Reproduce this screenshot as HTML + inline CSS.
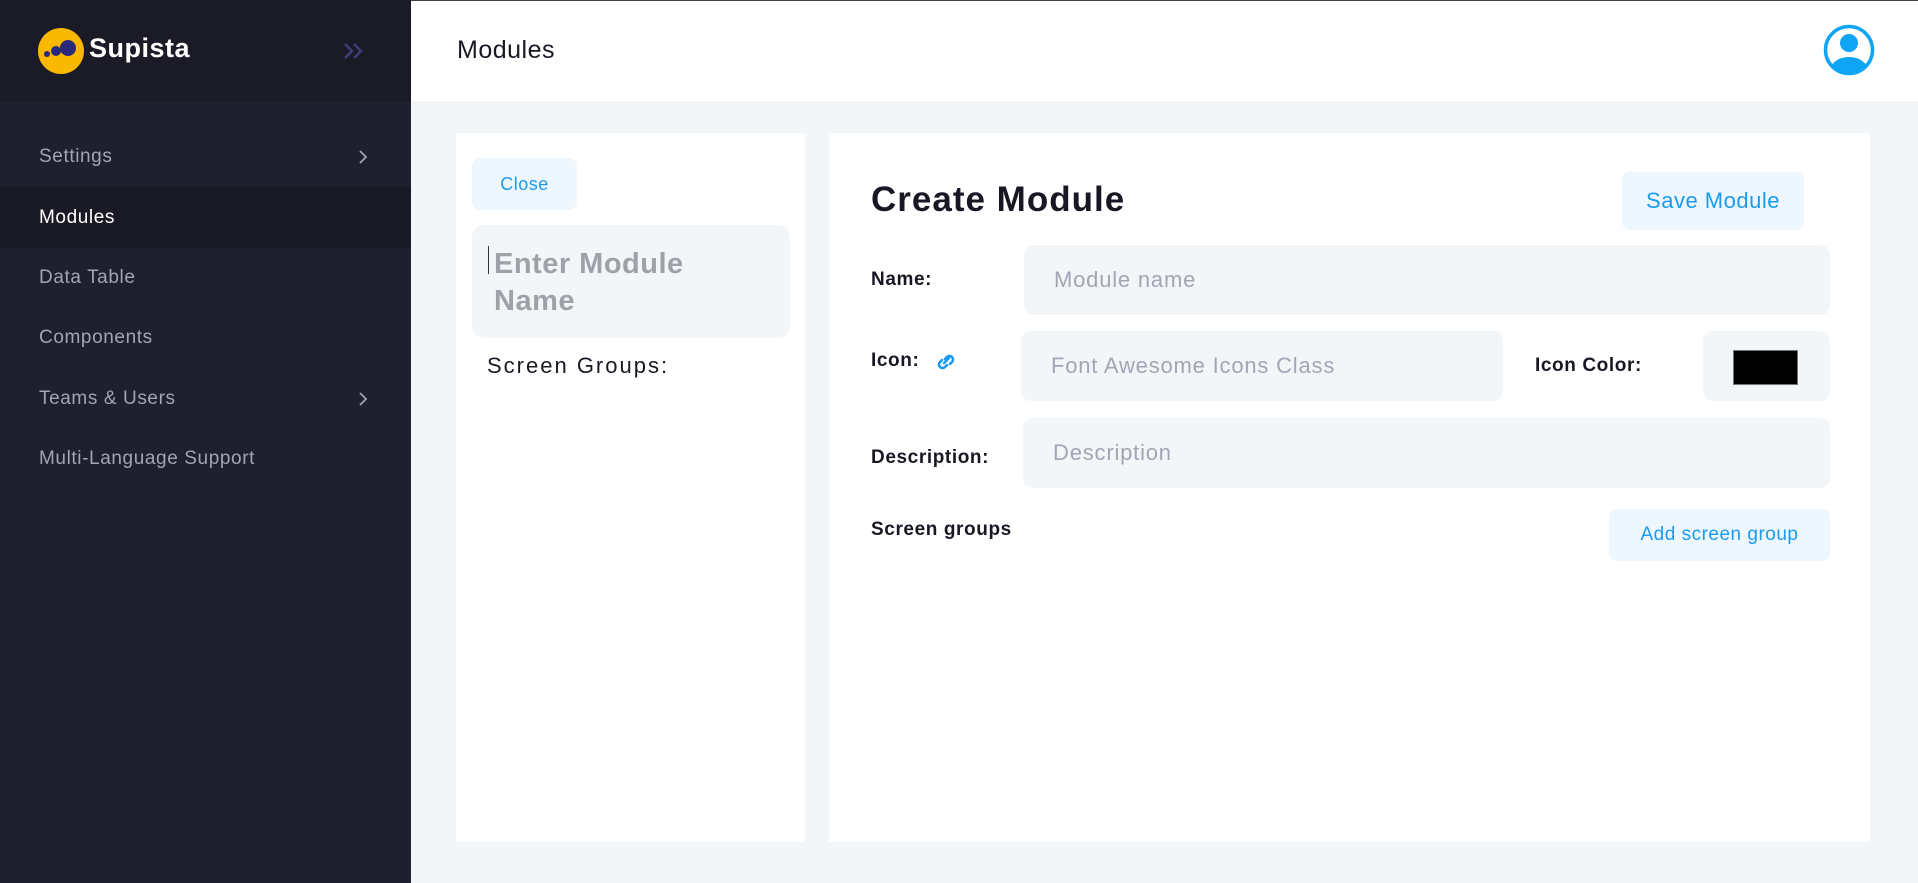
<!DOCTYPE html><html><head><style>
*{box-sizing:border-box;margin:0;padding:0}
body{width:1918px;height:883px;overflow:hidden;background:#f3f6f9;font-family:"Liberation Sans",sans-serif;position:relative;letter-spacing:0.5px}
.a{position:absolute}
.side{left:0;top:0;width:411px;height:883px;background:#1f1f2e}
.sh{left:0;top:0;width:411px;height:101px;background:#1b1b27}
.nav{left:39px;font-size:19px;color:#a3a3b8;letter-spacing:0.6px}
.lbl{font-size:19px;font-weight:bold;color:#181824;letter-spacing:0.6px}
.inp{background:#f3f6f9;border-radius:10px;color:#a2a5b5;font-size:22px;padding-left:30px;display:flex;align-items:center;letter-spacing:0.8px}
.btn{background:#eef7fd;border-radius:8px;color:#1a9bf0;display:flex;align-items:center;justify-content:center}
</style></head><body>
<div class="a" style="left:0;top:0;width:1918px;height:1px;background:#444"></div>
<div class="a side"></div>
<div class="a sh"></div>
<svg class="a" style="left:38px;top:28px" width="46" height="46"><circle cx="23" cy="23" r="23" fill="#fbb800"/><circle cx="30" cy="20" r="8" fill="#2a2a7a"/><circle cx="18" cy="23" r="5" fill="#2a2a7a"/><circle cx="9" cy="26" r="3" fill="#2a2a7a"/></svg>
<div class="a" style="left:89px;top:33px;font-size:27px;font-weight:bold;color:#fff">Supista</div>
<svg class="a" style="left:343px;top:42px" width="22" height="18"><path d="M2 2l7 7-7 7M11 2l7 7-7 7" stroke="#3d3d7a" stroke-width="2.5" fill="none"/></svg>
<div class="a" style="left:0;top:187px;width:411px;height:61px;background:#1a1a26"></div>
<div class="a nav" style="top:146px">Settings</div>
<div class="a nav" style="top:207px;color:#fff">Modules</div>
<div class="a nav" style="top:267px">Data Table</div>
<div class="a nav" style="top:327px">Components</div>
<div class="a nav" style="top:388px">Teams &amp; Users</div>
<div class="a nav" style="top:448px">Multi-Language Support</div>
<svg class="a" style="left:358px;top:150px" width="10" height="14"><path d="M2 1l6 6-6 6" stroke="#a3a3b8" stroke-width="1.8" fill="none"/></svg>
<svg class="a" style="left:358px;top:392px" width="10" height="14"><path d="M2 1l6 6-6 6" stroke="#a3a3b8" stroke-width="1.8" fill="none"/></svg>
<div class="a" style="left:411px;top:1px;width:1507px;height:100px;background:#fff"></div>
<div class="a" style="left:457px;top:36px;font-size:25px;color:#181824">Modules</div>
<svg class="a" style="left:1823px;top:24px" width="52" height="52"><circle cx="26" cy="26" r="23.5" stroke="#0ea5f7" stroke-width="3.5" fill="none"/><circle cx="26" cy="19" r="9" fill="#0ea5f7"/><path d="M8 42Q14 33 26 33Q38 33 44 42Q36 50 26 50Q16 50 8 42Z" fill="#0ea5f7"/></svg>
<div class="a" style="left:456px;top:133px;width:349px;height:709px;background:#fff"></div>
<div class="a btn" style="left:472px;top:158px;width:105px;height:52px;font-size:18px">Close</div>
<div class="a" style="left:472px;top:225px;width:318px;height:113px;background:#f3f6f9;border-radius:12px"></div>
<div class="a" style="left:488px;top:246px;width:1px;height:28px;background:#333"></div>
<div class="a" style="left:494px;top:246px;font-size:29px;font-weight:bold;color:#a0a0a8;line-height:37px">Enter Module<br>Name</div>
<div class="a" style="left:487px;top:353px;font-size:22px;letter-spacing:2px;color:#181824">Screen Groups:</div>
<div class="a" style="left:829px;top:133px;width:1041px;height:709px;background:#fff"></div>
<div class="a" style="left:871px;top:180px;font-size:35px;font-weight:bold;color:#181824;letter-spacing:1px">Create Module</div>
<div class="a btn" style="left:1622px;top:172px;width:182px;height:58px;font-size:22px">Save Module</div>
<div class="a lbl" style="left:871px;top:269px">Name:</div>
<div class="a inp" style="left:1024px;top:245px;width:806px;height:70px">Module name</div>
<div class="a lbl" style="left:871px;top:350px">Icon:</div>
<svg class="a" style="left:936px;top:351px" width="20" height="22"><path d="M8 12l5-5M6 9l-2 2a3.5 3.5 0 005 5l2-2M14 13l2-2a3.5 3.5 0 00-5-5l-2 2" stroke="#1a9bf0" stroke-width="2.6" fill="none" stroke-linecap="round"/></svg>
<div class="a inp" style="left:1021px;top:331px;width:482px;height:70px">Font Awesome Icons Class</div>
<div class="a lbl" style="left:1535px;top:355px">Icon Color:</div>
<div class="a" style="left:1703px;top:331px;width:127px;height:70px;background:#f3f6f9;border-radius:10px"></div>
<div class="a" style="left:1733px;top:350px;width:65px;height:35px;background:#000;border:1px solid #777"></div>
<div class="a lbl" style="left:871px;top:447px">Description:</div>
<div class="a inp" style="left:1023px;top:418px;width:807px;height:70px;align-items:flex-start;padding-top:22px">Description</div>
<div class="a lbl" style="left:871px;top:519px">Screen groups</div>
<div class="a btn" style="left:1609px;top:509px;width:221px;height:52px;font-size:19px">Add screen group</div>
</body></html>
